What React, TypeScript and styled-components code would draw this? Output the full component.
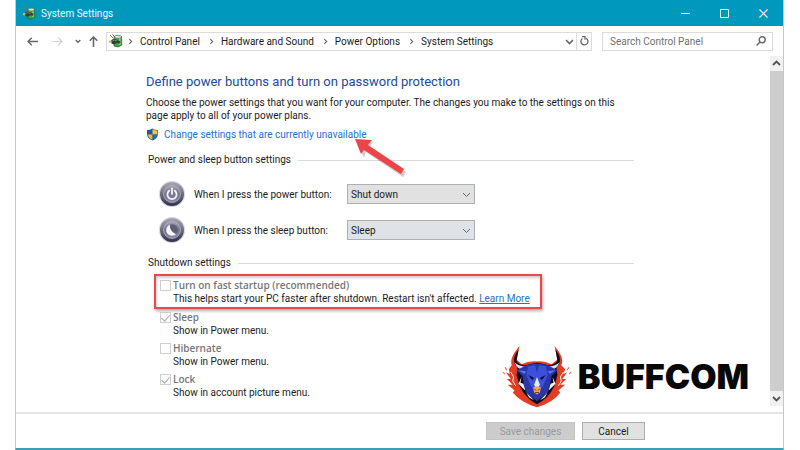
import React from "react";
import styled, { createGlobalStyle } from "styled-components";

const GlobalStyle = createGlobalStyle`
  * { box-sizing: border-box; }
  body { margin: 0; background: #fff; }
  body, button, input, select {
    font-family: Roboto, "Open Sans", sans-serif;
    font-size: 10px;
    color: #1c1c1c;
  }
  button { padding: 0; border: 0; background: none; }
  svg { display: block; flex: none; }
`;

const Window = styled.div`
  display: flex;
  flex-direction: column;
  min-height: 100vh;
  margin: 0 16px 0 15px;
  border: solid #a3d3e1;
  border-width: 0 1px;
  border-bottom: 2px solid #3b9fb5;
`;

const TitleBar = styled.header`
  display: flex;
  align-items: center;
  height: 26px;
  padding: 0 0 0 7px;
  background: #0099bd;
  color: #e9f8fc;
`;

const WindowTitle = styled.h1`
  flex: 1;
  margin: 0 0 0 5px;
  font-size: 10px;
  font-weight: 400;
`;

const CaptionButton = styled.button`
  display: grid;
  place-items: center;
  width: 39px;
  height: 26px;
  color: #e9f8fc;
`;

const NavBar = styled.nav`
  display: flex;
  align-items: center;
  height: 30px;
  padding: 0 10px 0 9px;
`;

const NavButton = styled.button<{ $width: number }>`
  display: grid;
  place-items: center;
  width: ${(p) => p.$width}px;
  height: 20px;
  color: #666;
  &:disabled { color: #d2d2d2; }
`;

const AddressBox = styled.div`
  display: flex;
  flex: 1;
  align-items: center;
  height: 19px;
  margin-right: 10px;
  padding-left: 2px;
  border: 1px solid #dcdcdc;
`;

const Crumbs = styled.ol`
  display: flex;
  flex: 1;
  align-items: center;
  margin: 0;
  padding: 0 0 0 4px;
  list-style: none;
`;

const Crumb = styled.li`
  display: flex;
  align-items: center;
  gap: 6px;
  margin-right: 8px;
  color: #666;
  a { color: #1c1c1c; text-decoration: none; white-space: nowrap; }
`;

const RefreshButton = styled(NavButton)`
  height: 17px;
  border-left: 1px solid #dcdcdc;
`;

const SearchBox = styled.label`
  display: flex;
  align-items: center;
  width: 171px;
  height: 19px;
  padding: 0 6px 0 7px;
  border: 1px solid #dcdcdc;
`;

const SearchInput = styled.input`
  flex: 1;
  min-width: 0;
  padding: 0;
  border: 0;
  outline: 0;
  background: none;
  &::placeholder { color: #707070; opacity: 1; }
`;

const Body = styled.div`
  position: relative;
  display: flex;
  flex: 1;
`;

const Main = styled.main`
  flex: 1;
  padding: 16px 24px 6px 130px;
`;

const Column = styled.div`
  max-width: 488px;
`;

const Heading = styled.h2`
  margin: 0 0 4px;
  font-size: 13px;
  font-weight: 400;
  line-height: 20px;
  color: #214a9c;
`;

const Intro = styled.p`
  margin: 0 0 4px;
  line-height: 13px;
`;

const AdminLine = styled.div`
  position: relative;
  display: flex;
  align-items: center;
  gap: 5px;
  width: max-content;
  height: 16px;
  a { color: #2a6fd0; text-decoration: none; }
`;

const Pointer = styled.svg`
  position: absolute;
  top: 8px;
  left: 205px;
  overflow: visible;
`;

const GroupTitle = styled.h3`
  display: flex;
  align-items: center;
  gap: 7px;
  margin: 10px 0 0;
  padding-left: 2px;
  font-size: 10px;
  font-weight: 400;
  line-height: 16px;
  &::after {
    content: "";
    flex: 1;
    height: 1px;
    background: #d9d9d9;
  }
`;

const ButtonRows = styled.div`
  display: grid;
  gap: 8px;
  margin: 12px 0 11px;
  padding-left: 12px;
`;

const ButtonRow = styled.div`
  display: grid;
  grid-template-columns: 28px 145px 128px;
  column-gap: 8px;
  align-items: center;
  label { white-space: nowrap; }
`;

const SelectWrap = styled.div`
  display: grid;
  align-items: center;
  > * { grid-area: 1 / 1; }
  svg { justify-self: end; margin-right: 4px; color: #666; pointer-events: none; }
`;

const Select = styled.select<{ $cool?: boolean }>`
  appearance: none;
  width: 100%;
  height: 20px;
  padding: 0 16px 0 3px;
  border: 1px solid #adb0b3;
  border-radius: 0;
  background: ${(p) => (p.$cool ? "#dfe3e7" : "#e1e1e1")};
`;

const Option = styled.div<{ $marked?: boolean }>`
  width: ${(p) => (p.$marked ? "388px" : "auto")};
  margin: ${(p) => (p.$marked ? "3px 0 1px 8px" : "0 0 3px 10px")};
  padding: ${(p) => (p.$marked ? "2px 4px 1px" : "0 4px")};
  border: ${(p) => (p.$marked ? "2px solid #e8494d" : "0 solid transparent")};
  box-shadow: ${(p) => (p.$marked ? "1px 2px 3px #0005, inset 1px 2px 3px #0003" : "none")};
  line-height: 14px;
`;

const OptionLabel = styled.label`
  display: flex;
  align-items: center;
  gap: 2px;
  height: 14px;
  font-family: "Open Sans", sans-serif;
  font-weight: 600;
  color: #777;
`;

const Check = styled.input`
  appearance: none;
  display: grid;
  place-items: center;
  width: 11px;
  height: 11px;
  margin: 0;
  border: 1px solid #cfcfcf;
  background: #fff;
  &:checked::after {
    content: "";
    width: 4px;
    height: 7px;
    margin-bottom: 2px;
    border: solid #aaa;
    border-width: 0 1px 1px 0;
    transform: rotate(40deg);
  }
`;

const OptionText = styled.p`
  margin: 0 0 0 13px;
  white-space: nowrap;
  a { color: #2a6fd0; }
`;

const ScrollBar = styled.div`
  display: flex;
  flex-direction: column;
  width: 13px;
  margin-bottom: 6px;
  background: #cdcdcd;
`;

const ScrollButton = styled.button`
  display: grid;
  place-items: center;
  height: 15px;
  background: #f1f1f1;
  color: #555;
`;

const Thumb = styled.div`
  flex: 1;
`;

const Brand = styled.div`
  position: absolute;
  right: 34px;
  bottom: 3px;
  display: flex;
  align-items: center;
  gap: 6px;
`;

const BrandName = styled.span`
  font-family: Inter, sans-serif;
  font-size: 34px;
  font-weight: 900;
  line-height: 44px;
  color: #080808;
`;

const Footer = styled.footer`
  display: flex;
  justify-content: flex-end;
  align-items: center;
  gap: 7px;
  height: 36px;
  padding-right: 138px;
  border-top: 2px solid #e6e6e6;
`;

const ActionButton = styled.button<{ $width: number }>`
  width: ${(p) => p.$width}px;
  height: 18px;
  border: 1px solid #adadad;
  background: #e1e1e1;
  &:disabled { border-color: #c4c4c4; background: #cccccc; color: #9a9a9a; }
`;

type Dir = "up" | "down" | "right";
const chevrons: Record<Dir, string> = {
  up: "M1 6 4.5 2.5 8 6",
  down: "M1 3 4.5 6.5 8 3",
  right: "M3 1.5 6 4.5 3 7.5",
};

function Chevron({ dir, size = 9, weight = 1.3 }: { dir: Dir; size?: number; weight?: number }) {
  return (
    <svg width={size} height={size} viewBox="0 0 9 9" fill="none" stroke="currentColor" strokeWidth={weight}>
      <path d={chevrons[dir]} />
    </svg>
  );
}

function BatteryIcon({ size }: { size: number }) {
  return (
    <svg width={size} height={size} viewBox="0 0 14 14">
      <path d="M5 2.5 Q9 .3 12.5 2.5 L12.8 11 Q9 14.5 5 12Z" fill="#43a047" stroke="#315b35" strokeWidth=".7" />
      <ellipse cx="8.8" cy="2.8" rx="3.4" ry="1.5" fill="#d5ead5" stroke="#516653" strokeWidth=".5" />
      <path d="M10.8 4.5V11" stroke="#8ce582" strokeWidth="1.3" />
      <path d="M1 1.2 4 4M3.4.3 5.8 3" stroke="#6c7376" strokeWidth="1" />
      <path d="M2 6.5Q5 3.8 8.5 6.3L11.5 7.4 10.6 9.5 7.5 9Q5 11.6 2.3 9.2Z" fill="#353c3c" />
      <path d="M3.5 6.8Q5.5 5.4 8 7" fill="none" stroke="#8d9995" strokeWidth=".8" />
      <path d="M0 6.6H2.6V8.8H0Z" fill="#d5b74b" />
    </svg>
  );
}

function ShieldIcon() {
  return (
    <svg width="13" height="13" viewBox="0 0 13 13">
      <path d="M6.5.5Q8.8 2 12 2V6.2Q11.6 10.3 6.5 12.6Q1.4 10.3 1 6.2V2Q4.2 2 6.5.5Z" fill="#245f9e" />
      <path d="M6.5 1.3V6.5H1.6V2.6Q4.3 2.5 6.5 1.3Z" fill="#235a92" />
      <path d="M6.5 1.3Q8.7 2.5 11.4 2.6V6.5H6.5Z" fill="#f4c542" />
      <path d="M1.7 6.5H6.5V11.8Q2.3 9.8 1.7 6.5Z" fill="#f2b92e" />
      <path d="M6.5 6.5H11.3Q10.7 9.8 6.5 11.8Z" fill="#2a6eae" />
    </svg>
  );
}

function RoundIcon({ kind }: { kind: "power" | "sleep" }) {
  return (
    <svg width="28" height="28" viewBox="0 0 28 28">
      <defs>
        <linearGradient id={`rim-${kind}`} x1="0" y1="0" x2="0" y2="1">
          <stop offset="0" stopColor="#a9a9b6" />
          <stop offset="1" stopColor="#30304c" />
        </linearGradient>
        <linearGradient id={`face-${kind}`} x1="0" y1="0" x2="0" y2="1">
          <stop offset="0" stopColor="#a4a4b2" />
          <stop offset=".5" stopColor="#74748c" />
          <stop offset="1" stopColor="#8a8aa8" />
        </linearGradient>
      </defs>
      <circle cx="14" cy="14" r="13" fill="#d4d4da" />
      <circle cx="14" cy="14" r="12" fill={`url(#rim-${kind})`} />
      <circle cx="14" cy="14" r="8.5" fill={`url(#face-${kind})`} stroke="#b4b4c2" strokeWidth=".8" />
      {kind === "power" ? (
        <path d="M11.2 10.8A4.6 4.6 0 1 0 16.8 10.8M14 8.3V14" fill="none" stroke="#f2f2f8" strokeWidth="1.8" strokeLinecap="round" />
      ) : (
        <>
          <circle cx="14" cy="14" r="5.8" fill="#5e5e74" />
          <path d="M12 8.6A5.8 5.8 0 1 0 18.2 18C14.2 17 11.2 12.8 12 8.6Z" fill="#f6f6fa" />
        </>
      )}
    </svg>
  );
}

function BullLogo() {
  return (
    <svg width="70" height="64" viewBox="0 0 72 64">
      <path d="M18 0C12 7 8 14 10 20L7 24 8 29 4 27 9 34 5 34 11 40 6 40 13 46 11 48Q20 59 36 63Q52 59 60 48L58 46 65 40 60 40 66 34 62 34 67 27 63 29 65 24 61 20C64 14 60 7 54 0L57 14 51 19Q43 15 36 16Q28 15 20 19L15 14Z" fill="#e43c22" />
      <path d="M17 4C11 11 11 18 16 22L15 30 18 41Q24 54 36 60Q48 54 54 41L57 30 56 22C61 18 61 11 55 4L57 15Q55 19 48 20L36 17 24 20Q16 19 15 15Z" fill="#0c0b1c" />
      <path d="M13 17Q19 22 27 21L27 25Q16 26 13 17ZM59 17Q53 22 45 21L45 25Q56 26 59 17Z" fill="#dfe2f2" />
      <path d="M25 20Q36 16 47 20L57 25 51 31 49 42 47 48 36 57 25 48 23 42 21 31 15 25Z" fill="#2b35a8" />
      <path d="M27 21 34 20 36 28 38 20 45 21 47 30 42 42 36 48 30 42 25 30Z" fill="#3c50dc" />
      <path d="M17 25 25 26 23 29ZM55 25 47 26 49 29Z" fill="#5475f4" />
      <path d="M27 30 33 33 31 35ZM45 30 39 33 41 35Z" fill="#090b25" />
      <path d="M36 32 39 40 36 45 33 40Z" fill="#e8e9f5" />
      <path d="M32 43Q36 40 40 43L39 48 36 50 33 48Z" fill="#eda85b" />
      <path d="M33 44 35 46M39 44 37 46M34 48H38" stroke="#6f3425" strokeWidth="1" />
      <path d="M20 32 17 39 24 46 22 39 19 38ZM52 32 55 39 48 46 50 39 53 38ZM25 48 33 56 28 53ZM47 48 39 56 44 53Z" fill="#f3f3f8" />
      <path d="M9 27 12 32 11 36 14 41M63 27 60 32 61 36 58 41" fill="none" stroke="#fff" strokeWidth="1" />
      <path d="M3 22 5 25M69 22 67 25M1 27 3 29M71 27 69 29" stroke="#e96b50" strokeWidth="1.2" />
    </svg>
  );
}

const crumbs = ["Control Panel", "Hardware and Sound", "Power Options", "System Settings"];

const options = [
  { id: "fast", label: "Turn on fast startup (recommended)", text: "This helps start your PC faster after shutdown. Restart isn't affected.", checked: false, marked: true },
  { id: "sleep", label: "Sleep", text: "Show in Power menu.", checked: true },
  { id: "hibernate", label: "Hibernate", text: "Show in Power menu.", checked: false },
  { id: "lock", label: "Lock", text: "Show in account picture menu.", checked: true },
];

export default function App() {
  return (
    <>
      <GlobalStyle />
      <Window>
        <TitleBar>
          <BatteryIcon size={13} />
          <WindowTitle>System Settings</WindowTitle>
          <CaptionButton aria-label="Minimize">
            <svg width="9" height="9" stroke="currentColor"><path d="M0 4.5H9" /></svg>
          </CaptionButton>
          <CaptionButton aria-label="Maximize">
            <svg width="9" height="9" fill="none" stroke="currentColor"><path d="M.5.5H8.5V8.5H.5Z" /></svg>
          </CaptionButton>
          <CaptionButton aria-label="Close">
            <svg width="9" height="9" stroke="currentColor" strokeWidth="1.2"><path d="M.5.5 8.5 8.5M8.5.5.5 8.5" /></svg>
          </CaptionButton>
        </TitleBar>

        <NavBar>
          <NavButton $width={14} aria-label="Back">
            <svg width="11" height="9" fill="none" stroke="currentColor" strokeWidth="1.4"><path d="M11 4.5H1M4.8.7 1 4.5 4.8 8.3" /></svg>
          </NavButton>
          <NavButton $width={36} aria-label="Forward" disabled>
            <svg width="11" height="9" fill="none" stroke="currentColor" strokeWidth="1.2"><path d="M0 4.5H10M6.2.7 10 4.5 6.2 8.3" /></svg>
          </NavButton>
          <NavButton $width={6} aria-label="Recent locations"><Chevron dir="down" size={6} weight={2} /></NavButton>
          <NavButton $width={25} aria-label="Up">
            <svg width="9" height="11" fill="none" stroke="currentColor" strokeWidth="1.5"><path d="M4.5 11V1M.7 4.8 4.5 1 8.3 4.8" /></svg>
          </NavButton>
          <AddressBox>
            <BatteryIcon size={14} />
            <Crumbs>
              {crumbs.map((name) => (
                <Crumb key={name}>
                  <Chevron dir="right" size={7} weight={1.5} />
                  <a href="#">{name}</a>
                </Crumb>
              ))}
            </Crumbs>
            <NavButton $width={14} aria-label="Previous locations"><Chevron dir="down" weight={1.6} /></NavButton>
            <RefreshButton $width={15} aria-label="Refresh">
              <svg width="9" height="10" viewBox="0 0 9 10" fill="none" stroke="currentColor" strokeWidth="1.3">
                <path d="M6.2 2.4A3.5 3.5 0 1 1 2.5 2.5M2 .7H5V3.8" />
              </svg>
            </RefreshButton>
          </AddressBox>
          <SearchBox>
            <SearchInput type="search" placeholder="Search Control Panel" aria-label="Search Control Panel" />
            <svg width="10" height="10" fill="none" stroke="#666" strokeWidth="1.4">
              <circle cx="6.2" cy="3.8" r="3" /><path d="M4 6 .6 9.4" />
            </svg>
          </SearchBox>
        </NavBar>

        <Body>
          <Main>
            <Column>
              <Heading>Define power buttons and turn on password protection</Heading>
              <Intro>
                Choose the power settings that you want for your computer. The changes you make to the settings on this page apply to all of your power plans.
              </Intro>
              <AdminLine>
                <ShieldIcon />
                <a href="#">Change settings that are currently unavailable</a>
                <Pointer width="56" height="44" viewBox="0 0 56 44" aria-hidden="true">
                  <path d="M4 5 20 5 17 10 53 35 50 40 13 15 11 21Z" transform="translate(2 3)" fill="#0003" />
                  <path d="M4 5 21 6 17 11 53 35 50 40 13 16 10 20Z" fill="#ee4447" />
                </Pointer>
              </AdminLine>

              <GroupTitle>Power and sleep button settings</GroupTitle>
              <ButtonRows>
                <ButtonRow>
                  <RoundIcon kind="power" />
                  <label htmlFor="power">When I press the power button:</label>
                  <SelectWrap>
                    <Select id="power"><option>Shut down</option><option>Sleep</option></Select>
                    <Chevron dir="down" weight={1} />
                  </SelectWrap>
                </ButtonRow>
                <ButtonRow>
                  <RoundIcon kind="sleep" />
                  <label htmlFor="sleep-button">When I press the sleep button:</label>
                  <SelectWrap>
                    <Select id="sleep-button" $cool><option>Sleep</option><option>Shut down</option></Select>
                    <Chevron dir="down" weight={1} />
                  </SelectWrap>
                </ButtonRow>
              </ButtonRows>

              <GroupTitle>Shutdown settings</GroupTitle>
              {options.map((o) => (
                <Option key={o.id} $marked={o.marked}>
                  <OptionLabel>
                    <Check type="checkbox" defaultChecked={o.checked} disabled />
                    {o.label}
                  </OptionLabel>
                  <OptionText>
                    {o.text}
                    {o.marked && <> <a href="#">Learn More</a></>}
                  </OptionText>
                </Option>
              ))}
            </Column>
          </Main>
          <ScrollBar>
            <ScrollButton aria-label="Scroll up"><Chevron dir="up" weight={1.8} /></ScrollButton>
            <Thumb />
            <ScrollButton aria-label="Scroll down"><Chevron dir="down" weight={1.8} /></ScrollButton>
          </ScrollBar>
          <Brand>
            <BullLogo />
            <BrandName>BUFFCOM</BrandName>
          </Brand>
        </Body>

        <Footer>
          <ActionButton $width={89} disabled>Save changes</ActionButton>
          <ActionButton $width={63}>Cancel</ActionButton>
        </Footer>
      </Window>
    </>
  );
}
